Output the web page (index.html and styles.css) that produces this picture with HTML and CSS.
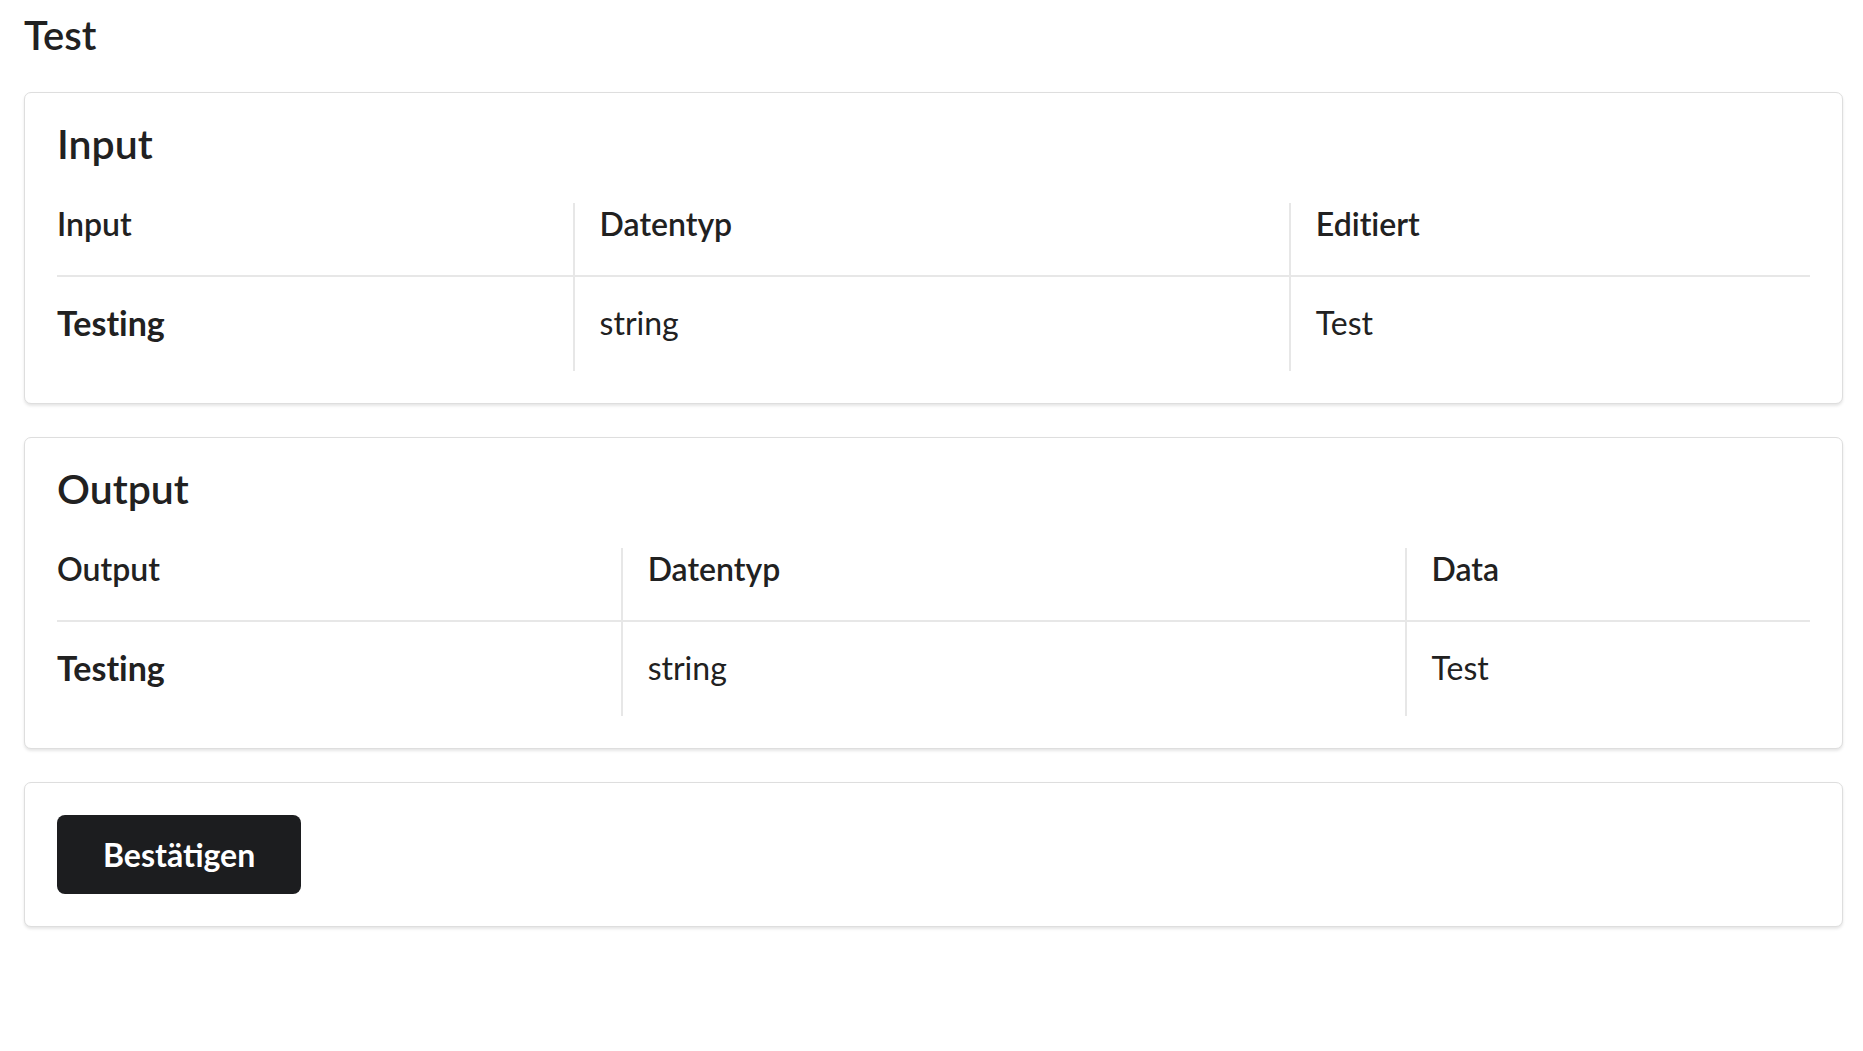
FILE: index.html
```html
<!DOCTYPE html>
<html lang="de">
<head>
<meta charset="utf-8">
<title>Test</title>
<link rel="stylesheet" href="styles.css">
</head>
<body>
<main class="page">
  <h1 class="page-title">Test</h1>

  <section class="card">
    <h2 class="card-title">Input</h2>
    <table class="io-table">
      <colgroup>
        <col class="in-c1"><col class="in-c2"><col class="in-c3">
      </colgroup>
      <thead>
        <tr><th>Input</th><th>Datentyp</th><th>Editiert</th></tr>
      </thead>
      <tbody>
        <tr><td class="name">Testing</td><td>string</td><td>Test</td></tr>
      </tbody>
    </table>
  </section>

  <section class="card">
    <h2 class="card-title">Output</h2>
    <table class="io-table">
      <colgroup>
        <col class="out-c1"><col class="out-c2"><col class="out-c3">
      </colgroup>
      <thead>
        <tr><th>Output</th><th>Datentyp</th><th>Data</th></tr>
      </thead>
      <tbody>
        <tr><td class="name">Testing</td><td>string</td><td>Test</td></tr>
      </tbody>
    </table>
  </section>

  <section class="card">
    <button class="btn-primary" type="button">Bestätigen</button>
  </section>
</main>
</body>
</html>
```

FILE: styles.css
```css
* { box-sizing: border-box; }

html, body {
  margin: 0;
  background: #ffffff;
}

body {
  font-family: Lato, "Noto Sans", "Liberation Sans", sans-serif;
  color: #212121;
  font-variant-ligatures: no-common-ligatures;
}

.page {
  display: flex;
  flex-direction: column;
  gap: 33px;
  padding: 11px 20px 40px 24px;
}

.page-title {
  margin: 0;
  font-size: 40px;
  font-weight: 600;
  line-height: 48px;
}

.card {
  background: #fff;
  border: 1px solid #dedede;
  border-radius: 7px;
  box-shadow: 0 2px 3px rgba(0, 0, 0, 0.10);
  padding: 32px;
}

.card-title {
  margin: 0 0 40px;
  font-size: 41px;
  font-weight: 600;
  line-height: 38px;
}

.io-table {
  width: 100%;
  table-layout: fixed;
  border-collapse: collapse;
  font-size: 32px;
}

.in-c1 { width: 29.47%; }
.in-c2 { width: 40.86%; }
.in-c3 { width: 29.67%; }
.out-c1 { width: 32.21%; }
.out-c2 { width: 44.72%; }
.out-c3 { width: 23.07%; }

.io-table th,
.io-table td {
  text-align: left;
  line-height: 38.4px;
  padding-left: 25px;
  padding-right: 25px;
  vertical-align: top;
}

.io-table th:first-child,
.io-table td:first-child {
  padding-left: 0;
}

.io-table th + th,
.io-table td + td {
  border-left: 2px solid #e7e7e7;
}

.io-table th {
  font-weight: 600;
  padding-top: 2px;
  padding-bottom: 32px;
  border-bottom: 2px solid #e7e7e7;
}

.io-table td {
  font-weight: 400;
  padding-top: 27px;
  padding-bottom: 28px;
}

.io-table td.name {
  font-size: 34px;
  font-weight: 700;
}

.btn-primary {
  align-self: flex-start;
  display: block;
  font-family: Lato, "Noto Sans", "Liberation Sans", sans-serif;
  font-size: 32px;
  font-weight: 700;
  line-height: normal;
  color: #ffffff;
  background: #1c1d1f;
  border: none;
  border-radius: 8px;
  padding: 20px 46px;
  cursor: pointer;
}
```
